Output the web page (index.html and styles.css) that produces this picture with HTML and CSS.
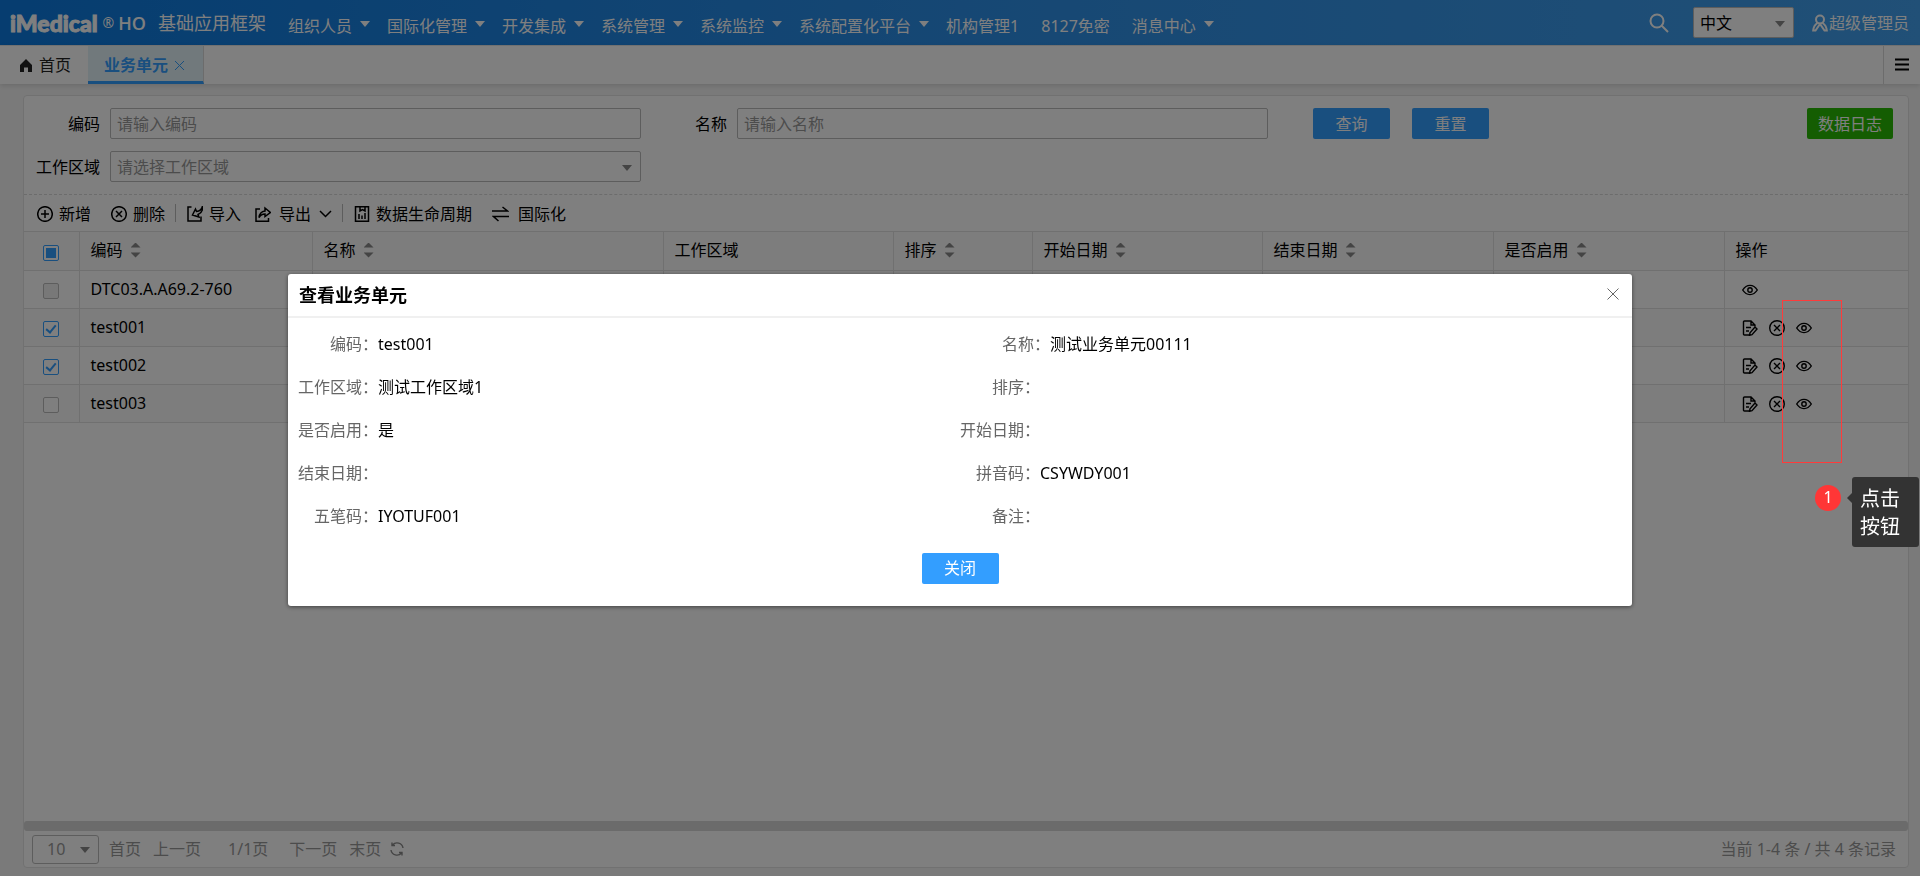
FILE: index.html
```html
<!DOCTYPE html>
<html lang="zh-CN">
<head>
    <meta charset="UTF-8">
    <title>业务单元</title>
    <link rel="stylesheet" href="styles.css">
</head>
<body>
    <!-- shared icons -->
    <svg class="sprite" aria-hidden="true">
        <symbol id="icon-eye" viewBox="0 0 16 16">
            <path d="M.7 8C2.6 5 5 3.4 8 3.4S13.400 5 15.300 8C13.400 11 11 12.600 8 12.600S2.600 11 .7 8Z"/>
            <circle cx="8" cy="8" r="2.200"/>
        </symbol>
        <symbol id="icon-cancel" viewBox="0 0 16 16">
            <circle cx="8" cy="8" r="7.300"/>
            <path d="M5 5l6 6M11 5l-6 6"/>
        </symbol>
        <symbol id="icon-edit" viewBox="0 0 16 16">
            <path d="M7 15H2.500Q1.500 15 1.500 14V2Q1.500 1 2.500 1H9L13 5V6.500M9 1V5H13M4 7.500H9M4 11H7"/>
            <path d="M7.500 15.300L8 12.800L13 7L15 9L10 14.700Z"/>
        </symbol>
    </svg>

    <header class="header">
        <div class="brand">
            <span class="brand-name">iMedical</span><sup class="brand-mark">®</sup>
            <span class="brand-ho">HO</span>
            <span class="brand-title">基础应用框架</span>
        </div>
        <nav class="nav">
            <a href="#" class="has-menu">组织人员</a>
            <a href="#" class="has-menu">国际化管理</a>
            <a href="#" class="has-menu">开发集成</a>
            <a href="#" class="has-menu">系统管理</a>
            <a href="#" class="has-menu">系统监控</a>
            <a href="#" class="has-menu">系统配置化平台</a>
            <a href="#">机构管理1</a>
            <a href="#">8127免密</a>
            <a href="#" class="has-menu">消息中心</a>
        </nav>
        <div class="header-right">
            <button class="icon-btn search" aria-label="搜索">
                <svg width="20" height="20" viewBox="0 0 20 20"><circle cx="8" cy="8" r="6.500"/><path d="M12.500 12.500L19 19"/></svg>
            </button>
            <div class="select lang">
                <select aria-label="语言"><option>中文</option></select>
            </div>
            <a href="#" class="user">
                <svg width="16" height="18" viewBox="0 0 16 18"><circle cx="8" cy="5.500" r="4"/><path d="M5.500 9C3 10.500 1.500 13 1.200 16.500H3.500L8 10L12.500 16.500H14.800C14.500 13 13 10.500 10.500 9"/></svg>
                <span>超级管理员</span>
            </a>
        </div>
    </header>

    <div class="tabs">
        <a href="#" class="tab">
            <svg width="12" height="13" viewBox="0 0 12 13"><path d="M6 0L0 6V13H4V8.500H8V13H12V6Z" fill="#222"/></svg>
            <span>首页</span>
        </a>
        <a href="#" class="tab active">
            <span>业务单元</span>
            <svg width="9" height="9" viewBox="0 0 9 9"><path d="M0 0L9 9M9 0L0 9"/></svg>
        </a>
        <button class="icon-btn tabs-menu" aria-label="菜单">
            <svg width="14" height="13" viewBox="0 0 14 13"><path d="M0 1.500H14M0 6.500H14M0 11.500H14" stroke="#000" stroke-width="2"/></svg>
        </button>
    </div>

    <main class="panel">
        <form class="search-form">
            <label for="code">编码</label>
            <input id="code" type="text" placeholder="请输入编码">
            <label for="name">名称</label>
            <input id="name" type="text" placeholder="请输入名称">
            <div class="form-buttons">
                <button type="button" class="btn">查询</button>
                <button type="button" class="btn">重置</button>
                <button type="button" class="btn btn-green">数据日志</button>
            </div>
            <label for="area">工作区域</label>
            <div class="select">
                <select id="area" class="empty"><option>请选择工作区域</option></select>
            </div>
        </form>

        <div class="toolbar">
            <button><svg width="16" height="16" viewBox="0 0 16 16"><circle cx="8" cy="8" r="7.300"/><path d="M8 4V12M4 8H12"/></svg>新增</button>
            <button><svg width="16" height="16"><use href="#icon-cancel"/></svg>删除</button>
            <span class="sep"></span>
            <button class="import"><svg width="16" height="16" viewBox="0 0 16 16"><path d="M4.500 1H1V15H14V10.500"/><path d="M15.500 0C15 3 13 5 9.500 5.500L8.500 3L5.500 9L12 11L11 8.500C14.500 7 16 4 15.500 0Z"/></svg>导入</button>
            <button class="export">
                <svg width="16" height="16" viewBox="0 0 16 16"><path d="M5 3H1V15.300H13.500V12"/><path d="M4 11.500C4.500 7.500 6.500 5.500 10 5V2L15.300 6.500L10 10.500V8C7.500 8 5.500 9 4 11.500Z"/></svg>
                <span>导出</span>
                <svg width="13" height="8" viewBox="0 0 13 8"><path d="M1 1L6.500 6.500L12 1"/></svg>
            </button>
            <span class="sep"></span>
            <button><svg width="16" height="16" viewBox="0 0 16 16"><path d="M1.500 .8H14.500V15.200H1.500ZM5 13V8M8 13V9.500M11 13V7M6 1V5L8.500 3.500L11 5V1"/></svg>数据生命周期</button>
            <button class="i18n"><svg width="17" height="16" viewBox="0 0 17 16"><path d="M0 5H15.500L10.500 1M17 10.500H1.500L6.500 15"/></svg>国际化</button>
        </div>

        <table class="grid">
            <colgroup>
                <col class="c-check"><col class="c-code"><col class="c-name"><col class="c-mid"><col class="c-sort"><col class="c-mid"><col class="c-date"><col class="c-date"><col>
            </colgroup>
            <thead>
                <tr>
                    <th class="center"><input type="checkbox" class="part" aria-label="全选"></th>
                    <th><span class="sortable">编码</span></th>
                    <th><span class="sortable">名称</span></th>
                    <th>工作区域</th>
                    <th><span class="sortable">排序</span></th>
                    <th><span class="sortable">开始日期</span></th>
                    <th><span class="sortable">结束日期</span></th>
                    <th><span class="sortable">是否启用</span></th>
                    <th>操作</th>
                </tr>
            </thead>
            <tbody>
                <tr>
                    <td class="center"><input type="checkbox" disabled aria-label="DTC03.A.A69.2-760"></td>
                    <td>DTC03.A.A69.2-760</td>
                    <td></td><td></td><td></td><td></td><td></td><td></td>
                    <td><div class="actions">
                        <button aria-label="查看"><svg width="16" height="16"><use href="#icon-eye"/></svg></button>
                    </div></td>
                </tr>
                <tr>
                    <td class="center"><input type="checkbox" checked aria-label="test001"></td>
                    <td>test001</td>
                    <td></td><td></td><td></td><td></td><td></td><td></td>
                    <td><div class="actions">
                        <button aria-label="修改"><svg width="16" height="16"><use href="#icon-edit"/></svg></button>
                        <button aria-label="删除"><svg width="16" height="16"><use href="#icon-cancel"/></svg></button>
                        <button aria-label="查看"><svg width="16" height="16"><use href="#icon-eye"/></svg></button>
                    </div></td>
                </tr>
                <tr>
                    <td class="center"><input type="checkbox" checked aria-label="test002"></td>
                    <td>test002</td>
                    <td></td><td></td><td></td><td></td><td></td><td></td>
                    <td><div class="actions">
                        <button aria-label="修改"><svg width="16" height="16"><use href="#icon-edit"/></svg></button>
                        <button aria-label="删除"><svg width="16" height="16"><use href="#icon-cancel"/></svg></button>
                        <button aria-label="查看"><svg width="16" height="16"><use href="#icon-eye"/></svg></button>
                    </div></td>
                </tr>
                <tr>
                    <td class="center"><input type="checkbox" aria-label="test003"></td>
                    <td>test003</td>
                    <td></td><td></td><td></td><td></td><td></td><td></td>
                    <td><div class="actions">
                        <button aria-label="修改"><svg width="16" height="16"><use href="#icon-edit"/></svg></button>
                        <button aria-label="删除"><svg width="16" height="16"><use href="#icon-cancel"/></svg></button>
                        <button aria-label="查看"><svg width="16" height="16"><use href="#icon-eye"/></svg></button>
                    </div></td>
                </tr>
            </tbody>
        </table>

        <div class="scrollbar"></div>
        <footer class="pager">
            <div class="select page-size">
                <select aria-label="每页条数"><option>10</option></select>
            </div>
            <a href="#">首页</a>
            <a href="#">上一页</a>
            <span class="page-no">1/1页</span>
            <a href="#">下一页</a>
            <a href="#">末页</a>
            <button class="icon-btn refresh" aria-label="刷新">
                <svg width="14" height="14" viewBox="0 0 14 14"><path d="M1 8A6 6 0 0 0 11.500 11M13 6A6 6 0 0 0 2.500 3M2 .5V3.500H5M12 13.500V10.500H9"/></svg>
            </button>
            <span class="total">当前 1-4 条 / 共 4 条记录</span>
        </footer>
    </main>

    <div class="mask">
        <section class="dialog" role="dialog" aria-labelledby="dialog-title">
            <div class="dialog-header">
                <h2 id="dialog-title">查看业务单元</h2>
                <button class="icon-btn" aria-label="关闭窗口">
                    <svg width="12" height="12" viewBox="0 0 12 12"><path d="M.5 .5L11.500 11.500M11.500 .5L.5 11.500" stroke="#666"/></svg>
                </button>
            </div>
            <dl class="details">
                <div><dt>编码：</dt><dd>test001</dd></div>
                <div class="indent"><dt>名称：</dt><dd>测试业务单元00111</dd></div>
                <div><dt>工作区域：</dt><dd>测试工作区域1</dd></div>
                <div><dt>排序：</dt><dd></dd></div>
                <div><dt>是否启用：</dt><dd>是</dd></div>
                <div><dt>开始日期：</dt><dd></dd></div>
                <div><dt>结束日期：</dt><dd></dd></div>
                <div><dt>拼音码：</dt><dd>CSYWDY001</dd></div>
                <div><dt>五笔码：</dt><dd>IYOTUF001</dd></div>
                <div><dt>备注：</dt><dd></dd></div>
            </dl>
            <button class="btn btn-close">关闭</button>
        </section>
    </div>

    <!-- step guide over the page -->
    <div class="guide-box"></div>
    <div class="guide-step">1</div>
    <div class="guide-tip">点击<br>按钮</div>
</body>
</html>
```
FILE: styles.css
```css
* {
    box-sizing: border-box;
}
body {
    margin: 0;
    min-height: 100vh;
    display: flex;
    flex-direction: column;
    background: #f5f5f5;
    font-family: "Noto Sans", "Noto Sans CJK SC", sans-serif;
    font-size: 16px;
    line-height: 24px;
    color: #000;
}
a {
    color: inherit;
    text-decoration: none;
}
button, input, select {
    font: inherit;
    color: inherit;
}
button {
    cursor: pointer;
}
svg {
    flex: none;
    fill: none;
    stroke: currentColor;
}
.sprite {
    position: absolute;
    width: 0;
    height: 0;
}
.icon-btn {
    display: flex;
    padding: 0;
    border: none;
    background: none;
}

/* header */
.header {
    display: flex;
    align-items: center;
    height: 45px;
    padding: 0 11px 0 10px;
    background: linear-gradient(to right, #0c7ae0, #2c8fe8 50%, #42a0ee);
    color: #fff;
    white-space: nowrap;
}
.brand {
    display: flex;
    align-items: center;
    width: 278px;
}
.brand-name {
    font-family: Lato, sans-serif;
    font-weight: 900;
    font-size: 23px;
    -webkit-text-stroke: 1px #fff;
}
.brand-mark {
    font-size: 14px;
    line-height: 16px;
    margin: 0 4px 0 5px;
}
.brand-ho {
    font-family: "Open Sans", sans-serif;
    font-weight: 600;
    font-size: 18px;
}
.brand-title {
    margin-left: 12px;
    font-size: 18px;
}
.nav {
    display: flex;
    gap: 22px;
    padding-top: 6px;
}
.nav .has-menu {
    display: flex;
    align-items: center;
    margin-right: -5px;
}
.nav .has-menu::after {
    content: "";
    margin: -4px 0 0 8px;
    border: 5px solid transparent;
    border-top: 6px solid #fff;
    border-bottom: none;
}
.header-right {
    display: flex;
    align-items: center;
    margin-left: auto;
}
.search {
    color: #fff;
    margin-right: 24px;
}
.search svg {
    stroke-width: 2;
}
.user {
    display: flex;
    align-items: center;
    gap: 1px;
    margin-left: 18px;
}
.user svg {
    stroke-width: 2;
}

/* form controls */
.select {
    position: relative;
}
.select::after {
    content: "";
    position: absolute;
    right: 9px;
    top: 14px;
    border: 5px solid transparent;
    border-top: 6px solid #888;
    border-bottom: none;
    pointer-events: none;
}
.select select,
.search-form input {
    display: block;
    appearance: none;
    width: 100%;
    height: 31px;
    padding: 0 6px;
    border: 1px solid #bbb;
    border-radius: 2px;
    background: #fff;
}
.search-form input::placeholder,
.select .empty {
    color: #999;
}
.lang {
    width: 101px;
    color: #000;
}
.btn {
    min-width: 77px;
    height: 31px;
    padding: 0 11px;
    border: none;
    border-radius: 2px;
    background: #339eff;
    color: #fff;
}
.btn-green {
    background: #28ba05;
}

/* tabs */
.tabs {
    display: flex;
    height: 39px;
    background: #fff;
    box-shadow: 0 2px 5px rgba(0, 0, 0, 0.12);
    border-top: 1px solid #e2e2e2;
}
.tab {
    display: flex;
    align-items: center;
    gap: 7px;
    padding: 0 17px 0 20px;
    color: #222;
}
.tab.active {
    padding: 3px 19px 0 16px;
    border-right: 1px solid #d8d8d8;
    border-bottom: 3px solid #339eff;
    background: #e3f2f9;
    color: #339eff;
    font-weight: bold;
}
.tab:first-child svg {
    stroke: none;
}
.tabs-menu {
    align-items: center;
    width: 37px;
    margin-left: auto;
    padding: 0 0 1px 11px;
    border-left: 1px solid #d8d8d8;
}

/* panel */
.panel {
    flex: 1;
    display: flex;
    flex-direction: column;
    margin: 11px 11px 8px 23px;
    border: 1px solid #e2e2e2;
    border-radius: 4px;
    background: #fff;
}
.search-form {
    display: grid;
    grid-template-columns: 76px 541fr 86px 541fr 625fr;
    align-items: center;
    row-gap: 12px;
    padding: 12px 15px 12px 0;
    border-bottom: 1px dashed #d8d8d8;
}
.search-form label {
    text-align: right;
}
.search-form > input,
.search-form .select {
    margin-left: 10px;
    width: auto;
}
.form-buttons {
    display: flex;
    gap: 22px;
    margin-left: 45px;
}
.form-buttons .btn-green {
    margin-left: auto;
}
.toolbar {
    display: flex;
    align-items: center;
    height: 36px;
    padding: 2px 0 0 3px;
}
.toolbar button {
    display: flex;
    align-items: center;
    gap: 6px;
    padding: 0 10px;
    border: none;
    background: none;
}
.toolbar svg {
    stroke-width: 1.5;
}
.toolbar .import {
    padding-right: 4px;
}
.toolbar .export {
    gap: 8px;
}
.toolbar .i18n {
    gap: 9px;
}
.sep {
    width: 1px;
    height: 18px;
    margin: -2px 1px 0 0;
    background: #bbb;
}

/* data grid */
.grid {
    width: 100%;
    table-layout: fixed;
    border-collapse: collapse;
    border-bottom: 1px solid #e0e0e0;
}
.c-check { width: 55px; }
.c-code { width: 233px; }
.c-name { width: 351px; }
.c-mid { width: 230px; }
.c-sort { width: 139px; }
.c-date { width: 231px; }
.grid th,
.grid td {
    height: 38px;
    padding: 0 11px 2px;
    border: 1px solid #e0e0e0;
    border-left: none;
    text-align: left;
    font-weight: normal;
}
.grid th {
    height: 39px;
    background: #fafafa;
}
.grid tbody tr:nth-child(even) {
    background: #fafafa;
}
.grid th:last-child,
.grid td:last-child {
    border-right: none;
}
.grid .center {
    padding: 0 0 2px;
    text-align: center;
}
.sortable {
    display: flex;
    align-items: center;
    gap: 8px;
}
.sortable::after {
    content: "";
    width: 10px;
    height: 15px;
    background: #888;
    clip-path: polygon(50% 0, 100% 5px, 0 5px, 0 10px, 100% 10px, 50% 100%, 0 10px, 0 5px);
}
.grid input {
    appearance: none;
    display: inline-grid;
    place-items: center;
    width: 16px;
    height: 16px;
    margin: 2px 0 0;
    border: 1px solid #bbb;
    border-radius: 2px;
    background: #fff;
    vertical-align: middle;
}
.grid input:disabled {
    background: #f0f0f0;
}
.grid input:checked,
.grid .part {
    border-color: #339eff;
}
.grid input:checked::after {
    content: "";
    width: 4px;
    height: 8px;
    margin-top: -2px;
    border: solid #339eff;
    border-width: 0 2px 2px 0;
    transform: rotate(40deg);
}
.grid .part::after {
    content: "";
    width: 10px;
    height: 10px;
    background: #339eff;
}
.actions {
    display: flex;
    gap: 11px;
    padding: 2px 0 0 6px;
}
.actions button {
    display: flex;
    padding: 0;
    border: none;
    background: none;
}
.actions svg {
    stroke-width: 1.4;
}

/* pager */
.scrollbar {
    height: 10px;
    margin-top: auto;
    border-radius: 3px;
    background: #d6d6d6;
}
.pager {
    display: flex;
    align-items: center;
    gap: 12px;
    height: 36px;
    padding: 0 12px 0 8px;
    color: #999;
}
.page-size {
    width: 67px;
    margin-right: -2px;
}
.page-size select {
    height: 29px;
    padding: 0 14px;
    border-radius: 3px;
}
.page-size::after {
    top: 12px;
}
.page-no {
    margin: 0 9px 0 15px;
}
.refresh {
    margin-left: -3px;
    color: #888;
}
.refresh svg {
    stroke-width: 1.4;
}
.total {
    margin-left: auto;
}

/* dialog */
.mask {
    position: fixed;
    inset: 0;
    display: flex;
    align-items: center;
    justify-content: center;
    padding-top: 3px;
    background: rgba(0, 0, 0, 0.5);
}
.dialog {
    width: 70%;
    padding-bottom: 22px;
    border-radius: 3px;
    background: #fff;
    box-shadow: 0 1px 4px rgba(0, 0, 0, 0.5);
}
.dialog-header {
    display: flex;
    align-items: center;
    justify-content: space-between;
    height: 44px;
    padding: 0 13px 0 11px;
    border-bottom: 2px solid #f0f0f0;
}
.dialog-header h2 {
    margin: 0;
    font-size: 18px;
}
.dialog-header .icon-btn {
    margin-bottom: 2px;
}
.details {
    display: grid;
    grid-template-columns: 1fr 1fr;
    margin: 5px 0 15px;
}
.details > div {
    display: flex;
    align-items: center;
    height: 43px;
}
.details > div:nth-child(odd),
.details .indent {
    padding-left: 10px;
}
.details dt {
    width: 80px;
    text-align: right;
    color: #666;
}
.details dd {
    margin: 0;
}
.btn-close {
    display: block;
    margin: 0 auto;
}

/* guide */
.guide-box,
.guide-step,
.guide-tip {
    position: absolute;
}
.guide-box {
    top: 300px;
    right: 78px;
    width: 60px;
    height: 163px;
    border: 1px solid #ff3b3b;
}
.guide-step {
    top: 485px;
    right: 79px;
    width: 26px;
    height: 26px;
    border-radius: 50%;
    background: #ff3636;
    color: #fff;
    text-align: center;
}
.guide-tip {
    top: 477px;
    right: 1px;
    width: 67px;
    padding: 8px 8px 6px;
    border-radius: 3px;
    background: #333;
    color: #fff;
    font-size: 20px;
    line-height: 28px;
}
.guide-tip::before {
    content: "";
    position: absolute;
    left: -5px;
    top: 16px;
    border: 5px solid transparent;
    border-right-color: #333;
    border-left: none;
}
```
